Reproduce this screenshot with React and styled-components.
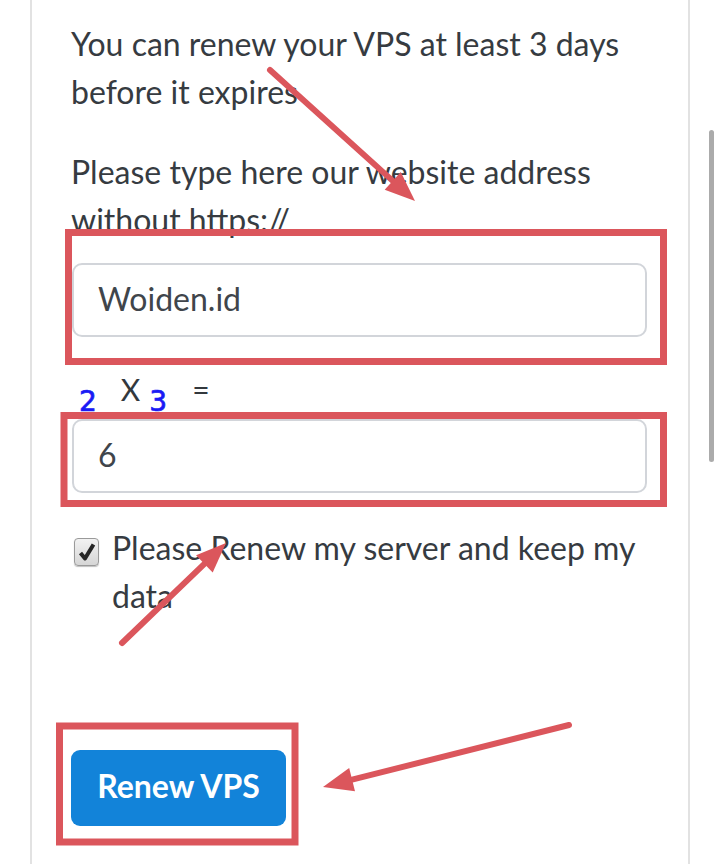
import { styled, createGlobalStyle } from "styled-components"

const GlobalStyle = createGlobalStyle`
    body{
        margin:0;
        background:#fff;
        overflow:hidden;
    }
`

const arrows = [
    { from: [270, 70], to: [415, 201] },
    { from: [122, 643], to: [226, 543] },
    { from: [569, 725], to: [323, 787] },
]

const boxes = [
    { x: 68.5, y: 232.5, w: 595, h: 129 },
    { x: 64, y: 415.5, w: 599.5, h: 88 },
    { x: 59.5, y: 726, w: 235.5, h: 116 },
]

const arrowHead = ({ from, to }) => {
    const dx = to[0] - from[0]
    const dy = to[1] - from[1]
    const len = Math.hypot(dx, dy)
    const ux = dx / len, uy = dy / len
    const px = -uy, py = ux
    const bx = to[0] - ux * 30, by = to[1] - uy * 30
    return {
        base: [bx, by],
        points: `${to[0]},${to[1]} ${bx + px * 12},${by + py * 12} ${bx - px * 12},${by - py * 12}`,
    }
}

const Annotations = () => (
    <Overlay width="716" height="864" viewBox="0 0 716 864">
        {boxes.map((b, i) => (
            <rect key={i} x={b.x} y={b.y} width={b.w} height={b.h} fill="none" stroke="#db565c" strokeWidth="7"/>
        ))}
        {arrows.map((a, i) => {
            const head = arrowHead(a)
            return (<g key={i}>
                <line x1={a.from[0]} y1={a.from[1]} x2={head.base[0]} y2={head.base[1]} stroke="#db565c" strokeWidth="6" strokeLinecap="round"/>
                <polygon points={head.points} fill="#db565c"/>
            </g>)
        })}
    </Overlay>
)

const App = () => {
    return (<Page>
        <GlobalStyle/>
        <Card>
            <Text>You can renew your VPS at least 3 days before it expires</Text>
            <Text $gap={32}>Please type here our website address without https://</Text>
            <Field $top={19} defaultValue="Woiden.id"/>
            <Captcha>
                <Digit>2</Digit>
                <Op>X</Op>
                <Digit>3</Digit>
                <Op $eq>=</Op>
            </Captcha>
            <Field $top={5} defaultValue="6"/>
            <CheckRow>
                <Box>
                    <svg width="18" height="20" viewBox="0 0 18 20">
                        <path d="M2.5 11 L7 16.5 L15.5 2.5" fill="none" stroke="#262626" strokeWidth="4" strokeLinejoin="round"/>
                    </svg>
                </Box>
                <CheckText>Please Renew my server and keep my data</CheckText>
            </CheckRow>
            <Button>Renew VPS</Button>
        </Card>
        <Annotations/>
        <Scrollbar/>
    </Page>)
}

const Page = styled.div`
    position:relative;
    height:864px;
    overflow:hidden;
    font-family:'Lato', 'Liberation Sans', sans-serif;
    color:#363b41;
`

const Card = styled.div`
    margin-left:30px;
    width:660px;
    height:100%;
    box-sizing:border-box;
    padding:20px 0 0 39px;
    border-left:2px solid #e2e2e2;
    border-right:2px solid #e2e2e2;
    display:flex;
    flex-direction:column;
    align-items:flex-start;
`

const Text = styled.p`
    margin:${p => p.$gap || 0}px 0 0;
    font-size:32px;
    line-height:48px;
    width:570px;
`

const Field = styled.input`
    margin-top:${p => p.$top}px;
    margin-left:1px;
    width:575px;
    height:74px;
    box-sizing:border-box;
    border:2px solid #d2d5da;
    border-radius:10px;
    padding:0 0 3px 24px;
    font-family:'Lato', sans-serif;
    font-size:32px;
    color:#40454b;
    background:#fff;
    outline:none;
`

const Captcha = styled.div`
    margin-top:29px;
    height:48px;
    display:flex;
    align-items:center;
    padding-left:8px;
`

const Digit = styled.span`
    font-family:'DejaVu Sans', sans-serif;
    font-size:28px;
    color:#1a1af5;
    -webkit-text-stroke:0.7px #1a1af5;
    transform:translateY(11px);
`

const Op = styled.span`
    font-size:30px;
    color:#33383d;
    margin:0 ${p => p.$eq ? 0 : 9}px 0 ${p => p.$eq ? 25 : 24}px;
    transform:translateY(-1px);
`

const CheckRow = styled.div`
    margin-top:31px;
    display:flex;
    align-items:flex-start;
`

const Box = styled.span`
    margin:14px 0 0 3px;
    width:25px;
    height:28px;
    box-sizing:border-box;
    border:1.5px solid #9a9a9a;
    border-radius:4px;
    background:linear-gradient(#f2f2f2, #d6d6d6);
    box-shadow:0 1px 1px rgba(0,0,0,0.25);
    display:flex;
    align-items:center;
    justify-content:center;
`

const CheckText = styled.span`
    margin-left:13px;
    width:534px;
    font-size:32px;
    line-height:48px;
`

const Button = styled.button`
    margin-top:130px;
    width:215px;
    height:76px;
    padding:0 0 6px;
    border:none;
    border-radius:9px;
    background:#1283d9;
    color:#fff;
    font-family:'Lato', sans-serif;
    font-weight:700;
    font-size:32px;
`

const Overlay = styled.svg`
    position:absolute;
    left:0;
    top:0;
    pointer-events:none;
`

const Scrollbar = styled.div`
    position:absolute;
    left:709px;
    top:130px;
    width:5px;
    height:332px;
    border-radius:3px;
    background:#ababab;
`

export default App
